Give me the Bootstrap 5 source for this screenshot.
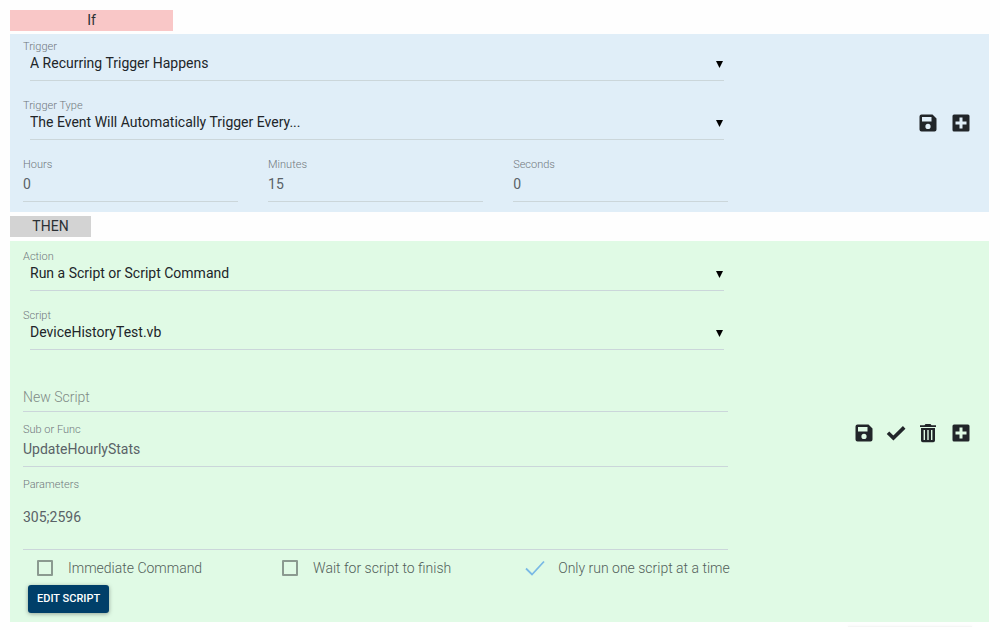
<!DOCTYPE html>
<html lang="en">
<head>
<meta charset="utf-8">
<meta name="viewport" content="width=device-width, initial-scale=1">
<title>Event editor</title>
<link href="https://cdn.jsdelivr.net/npm/bootstrap@5.3.0/dist/css/bootstrap.min.css" rel="stylesheet">
<style>
  body { font-family: Roboto, "Liberation Sans", sans-serif; font-size: 14px; line-height: 20px; color: #2b3034; background: #fefefe; }
  .page { padding: 10px 11px 0 10px; }
  .tag { height: 21px; line-height: 21px; text-align: center; margin-bottom: 3px; }
  .tag-if { width: 163px; background: #f9c7c7; }
  .tag-then { width: 81px; background: #d3d3d3; margin-bottom: 4px; }
  .panel { margin-bottom: 4px; }
  .panel-if { background: #e0eef8; padding-top: 5px; padding-bottom: 10px; }
  .panel-then { background: #e0fae5; padding-top: 8px; padding-bottom: 9px; }
  .fields { padding-left: 13px; padding-right: 16px; }
  .field-label { display: block; font-size: 11px; line-height: 16px; font-weight: 300; color: #70787d; }
  .field { margin-bottom: 17px; }
  .pick { position: relative; margin-left: 7px; margin-right: 4px; }
  .pick select { display: block; width: 100%; height: 26px; padding: 0 20px 8px 0; border: 0; border-bottom: 1px solid #cbd6da; border-radius: 0; background: transparent; color: #212529; font-size: 14px; line-height: 17px; appearance: none; outline: 0; }
  .pick svg { position: absolute; right: 1px; top: 6px; pointer-events: none; }
  .line-input { display: block; width: 100%; height: 29px; padding: 1px 0 8px; border: 0; border-bottom: 1px solid #cbd6da; border-radius: 0; background: transparent; color: #5a6267; font-size: 14px; line-height: 19px; outline: 0; }
  .line-input::placeholder { color: #7f8b86; font-weight: 300; opacity: 1; }
  .line-new { margin-top: 33px; padding: 4px 0 5px; }
  .line-area { height: 57px; padding: 14px 0 0; line-height: 20px; resize: none; overflow: hidden; }
  .after-line { margin-top: 10px; }
  .trio { display: grid; grid-template-columns: repeat(3, minmax(0, 1fr)); column-gap: 30px; }
  .options { margin-top: 8px; }
  .option { padding-left: 14px; column-gap: 15px; color: #52605a; font-weight: 300; white-space: nowrap; }
  .option input { appearance: none; width: 16px; height: 16px; margin: 0; border: 2px solid #8b9a90; border-radius: 1px; flex: none; }
  .option input:checked { width: 20px; margin-left: -2px; margin-right: -2px; border: 0; background: center / 20px 16px no-repeat url("data:image/svg+xml,%3Csvg xmlns='http://www.w3.org/2000/svg' viewBox='0 0 20 16'%3E%3Cpath d='M1 8.500 7 14.500 19 1.500' fill='none' stroke='%2379b9e5' stroke-width='1.800'/%3E%3C/svg%3E"); }
  .icons { margin-right: 12px; padding-top: 4px; }
  .icons button { width: 33px; height: 20px; padding: 0; border: 0; background: transparent; color: #212529; display: flex; align-items: center; justify-content: center; }
  .icons .tick { width: 31px; }
  .edit { height: 28px; margin: 7px 0 0 5px; padding: 0 9px; border: 0; border-radius: 3px; background: #003f69; color: #fff; font-size: 11px; line-height: 28px; font-weight: 500; box-shadow: 0 1px 4px rgba(0,0,0,.35); }
  .next-card { height: 1px; width: 124px; margin: 3px 17px 0 auto; background: #f5f5f5; box-shadow: 0 0 3px #eee; }
</style>
</head>
<body>
<svg class="d-none" aria-hidden="true">
  <symbol id="save" viewBox="0 0 18 18"><path fill="currentColor" fill-rule="evenodd" d="M2.500.500h11l4 4v11a2 2 0 0 1-2 2h-13a2 2 0 0 1-2-2v-13a2 2 0 0 1 2-2zM3 3v4.500h9.500V3zM9 9.800a2.600 2.600 0 1 0 0 5.200 2.600 2.600 0 0 0 0-5.200z"/></symbol>
  <symbol id="plus" viewBox="0 0 18 18"><path fill="currentColor" fill-rule="evenodd" d="M2 .500h14A1.500 1.500 0 0 1 17.500 2v14a1.500 1.500 0 0 1-1.500 1.500H2A1.500 1.500 0 0 1 .500 16V2A1.500 1.500 0 0 1 2 .500zM7.500 3.500v4h-4v3h4v4h3v-4h4v-3h-4v-4z"/></symbol>
  <symbol id="trash" viewBox="0 0 18 20"><path fill="currentColor" fill-rule="evenodd" d="M1 2.200h4.500L6.500 1h5l1 1.200H17V4H1zM2 5h14v12.500a1.700 1.700 0 0 1-1.700 1.700H3.700A1.700 1.700 0 0 1 2 17.500zM4.600 7v10h1.400V7zM8.300 7v10h1.400V7zM12 7v10h1.400V7z"/></symbol>
  <symbol id="check" viewBox="0 0 20 16"><path fill="none" stroke="currentColor" stroke-width="3.600" d="m2 7.800 5.400 5.200L18.200 2.400"/></symbol>
</svg>
<main class="page">
  <div class="tag tag-if">If</div>
  <section class="panel panel-if row g-0 align-items-center">
    <div class="fields col-9">
      <div class="field">
        <label class="field-label" for="trigger">Trigger</label>
        <div class="pick"><select id="trigger"><option>A Recurring Trigger Happens</option></select><svg width="7" height="7" viewBox="0 0 7 7"><path d="M0 0h7L3.500 7z"/></svg></div>
      </div>
      <div class="field">
        <label class="field-label" for="type">Trigger Type</label>
        <div class="pick"><select id="type"><option>The Event Will Automatically Trigger Every...</option></select><svg width="7" height="7" viewBox="0 0 7 7"><path d="M0 0h7L3.500 7z"/></svg></div>
      </div>
      <div class="trio">
        <div><label class="field-label" for="hours">Hours</label><input class="line-input" id="hours" type="text" value="0"></div>
        <div><label class="field-label" for="minutes">Minutes</label><input class="line-input" id="minutes" type="text" value="15"></div>
        <div><label class="field-label" for="seconds">Seconds</label><input class="line-input" id="seconds" type="text" value="0"></div>
      </div>
    </div>
    <div class="col-3 d-flex justify-content-end">
      <div class="icons d-flex">
        <button type="button" aria-label="Save trigger"><svg width="18" height="18"><use href="#save"/></svg></button>
        <button type="button" aria-label="Add trigger"><svg width="18" height="18"><use href="#plus"/></svg></button>
      </div>
    </div>
  </section>
  <div class="tag tag-then">THEN</div>
  <section class="panel panel-then row g-0 align-items-center">
    <div class="fields col-9">
      <div class="field">
        <label class="field-label" for="action">Action</label>
        <div class="pick"><select id="action"><option>Run a Script or Script Command</option></select><svg width="7" height="7" viewBox="0 0 7 7"><path d="M0 0h7L3.500 7z"/></svg></div>
      </div>
      <div>
        <label class="field-label" for="script">Script</label>
        <div class="pick"><select id="script"><option>DeviceHistoryTest.vb</option></select><svg width="7" height="7" viewBox="0 0 7 7"><path d="M0 0h7L3.500 7z"/></svg></div>
      </div>
      <input class="line-input line-new" type="text" placeholder="New Script" aria-label="New Script">
      <label class="field-label after-line" for="sub">Sub or Func</label>
      <input class="line-input" id="sub" type="text" value="UpdateHourlyStats">
      <label class="field-label after-line" for="params">Parameters</label>
      <textarea class="line-input line-area" id="params">305;2596</textarea>
      <div class="trio options">
        <label class="option d-flex align-items-center"><input type="checkbox">Immediate Command</label>
        <label class="option d-flex align-items-center"><input type="checkbox">Wait for script to finish</label>
        <label class="option d-flex align-items-center"><input type="checkbox" checked>Only run one script at a time</label>
      </div>
      <button class="edit" type="button">EDIT SCRIPT</button>
    </div>
    <div class="col-3 d-flex justify-content-end">
      <div class="icons d-flex">
        <button type="button" aria-label="Save action"><svg width="18" height="18"><use href="#save"/></svg></button>
        <button class="tick" type="button" aria-label="Apply action"><svg width="20" height="16"><use href="#check"/></svg></button>
        <button type="button" aria-label="Delete action"><svg width="18" height="20"><use href="#trash"/></svg></button>
        <button type="button" aria-label="Add action"><svg width="18" height="18"><use href="#plus"/></svg></button>
      </div>
    </div>
  </section>
  <div class="next-card"></div>
</main>
<script src="https://cdn.jsdelivr.net/npm/bootstrap@5.3.0/dist/js/bootstrap.bundle.min.js"></script>
</body>
</html>
